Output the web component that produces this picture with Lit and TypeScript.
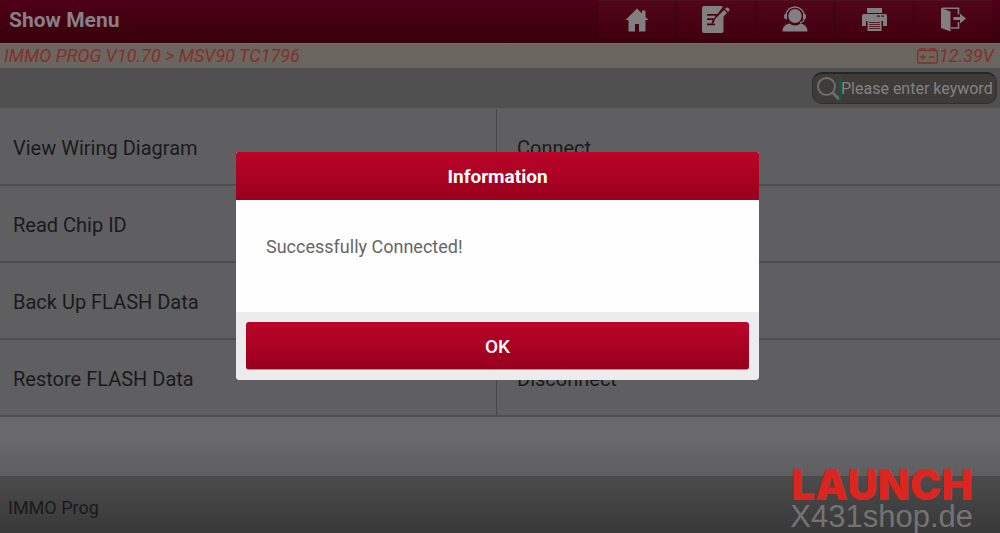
import { LitElement, html, css, svg } from "lit";
import { customElement, state } from "lit/decorators.js";

const home = svg`<path d="M12 1 0.500 12.500H3.500V24h6.500v-7.500h4V24h6.500V12.500h3L20.500 9.500V3H17V6z"/>`;
const edit = svg`<path d="M2 0h17a2 2 0 0 1 1.800 1L15.500 8H5v1.800h9l-2 2.400H5V14h5.500L9.500 17.500l4-1L21.500 8.500V25a2 2 0 0 1-2 2H2a2 2 0 0 1-2-2V2a2 2 0 0 1 2-2zM5 17.500v1.800h8v-1.800z" fill-rule="evenodd"/><path d="M22 4l3 3-9 9-4.500 1.500L13 13zM23 3l1.200-1.200q1-.800 2 0l1 1q.800 1 0 2L26 6z"/>`;
const support = svg`<ellipse cx="13" cy="9" rx="6.700" ry="7"/><path d="M4 8.500a9 8.500 0 0 1 18 0M23 10q-.500 4.500-5 6" fill="none" stroke="currentColor" stroke-width="1.400"/><path d="M2 9q0-2.500 3-2.500v6Q2 12.500 2 9zM24 9q0-2.500-3-2.500v6q3 0 3-3.500zM.500 24.500c0-4.500 2.500-7 7-8 3 2.500 8 2.500 11 0 4.500 1 7 3.500 7 8z"/>`;
const printer = svg`<path d="M5 0h15v5H5zM2 6h21a2 2 0 0 1 2 2V18h-4v-5H4v5H0V8a2 2 0 0 1 2-2zM15 7.500v1.200h3V7.500zM19.500 7.500v1.200H22V7.500z" fill-rule="evenodd"/><path d="M5.500 12h14v11h-14zM7 14v.800h11V14zM7 16v.800h11V16zM7 18v.800h11V18zM7 20v.800h11V20z" fill-rule="evenodd"/>`;
const exit = svg`<path d="M0 .500l9.500 3.500v20L0 20.500z"/><path d="M1 .800h16.500V7M17.500 14.500v6H10" fill="none" stroke="currentColor" stroke-width="1.600"/><path d="M12.500 9.500H19V6l6 5-6 5v-3.500h-6.500z"/>`;

const tools = [
  { name: "Home", icon: home, box: "0 0 24 24", size: "24" },
  { name: "Edit", icon: edit, box: "0 0 28 27", size: "28" },
  { name: "Support", icon: support, box: "0 0 26 25", size: "26" },
  { name: "Print", icon: printer, box: "0 0 25 23", size: "25" },
  { name: "Exit", icon: exit, box: "0 0 25 24", size: "25" },
];

const entries = [
  "View Wiring Diagram", "Connect",
  "Read Chip ID", "",
  "Back Up FLASH Data", "",
  "Restore FLASH Data", "Disconnect",
];

@customElement("app-root")
export class AppRoot extends LitElement {
  @state() private open = true;

  static styles = css`
    * { box-sizing: border-box; }
    :host {
      display: flex;
      flex-direction: column;
      position: relative;
      min-height: 100vh;
      overflow: hidden;
      font-family: Roboto, sans-serif;
      font-size: 18px;
      line-height: 24px;
      color: #1a1a1b;
      background: linear-gradient(#5d5d5f, #69696b 440px, #5e5e60 475px);
    }
    button { font: inherit; border: 0; padding: 0; cursor: pointer; }
    .top {
      display: flex;
      height: 43px;
      padding-right: 8px;
      background: linear-gradient(#4f0017, #38000c);
      color: #858184;
    }
    h1 { flex: 1; margin: 0; padding: 0 9px; font-size: 21px; font-weight: 700; line-height: 40px; }
    .tools { display: flex; border-top: 1px solid #4f1020; }
    .tool {
      display: grid;
      place-items: center;
      width: 79px;
      height: 37px;
      border-left: 1px solid #35000b;
      background: linear-gradient(#500619, #42000f);
      color: #817f80;
    }
    .status {
      display: flex;
      justify-content: space-between;
      height: 25px;
      padding: 0 6px 0 4px;
      border-top: 1px solid #756d68;
      background: #6a655f;
      color: #84302b;
      font-style: italic;
    }
    .power { display: flex; align-items: center; gap: 1px; }
    .find { display: flex; justify-content: flex-end; height: 41px; padding: 4px 3px; background: #505050; border-bottom: 1px solid #5d5d5e; }
    .search {
      display: flex;
      align-items: center;
      width: 185px;
      height: 32px;
      padding-left: 4px;
      border: 1px solid #303030;
      border-top: 2px solid #262626;
      border-radius: 10px;
      background: #3e3b39;
      color: #6d6d6d;
    }
    .search svg { flex: none; }
    .search input {
      flex: 1;
      min-width: 0;
      height: 22px;
      margin-left: -2px;
      padding: 0;
      border: 0;
      border-left: 2px solid #0d5c4a;
      outline: 0;
      background: none;
      color: #848281;
      font: 16px/22px Roboto, sans-serif;
    }
    .search input::placeholder { color: #848281; opacity: 1; }
    .menu { display: grid; grid-template-columns: 1fr 1fr; margin: 0; padding: 0; list-style: none; background: #5f5f61; font-size: 20px; }
    .menu li { display: flex; height: 77px; border-bottom: 2px solid #504d4e; }
    .menu li:nth-child(odd) { border-right: 1px solid #4a4748; margin-right: 3px; }
    .menu li:nth-child(even) { margin-left: -3px; }
    .entry { flex: 1; padding: 3px 20px 0; background: none; color: inherit; text-align: left; }
    .menu li:nth-child(odd) .entry { padding-left: 13px; }
    footer {
      height: 57px;
      margin-top: auto;
      padding: 0 8px;
      background: linear-gradient(#4b4b4b, #383838);
      line-height: 64px;
    }
    .brand { position: absolute; right: 27px; bottom: 0; text-align: right; font-family: "Liberation Sans", sans-serif; }
    .brand strong { display: block; color: #db251e; font: 900 42px/32px Inter, sans-serif; }
    .brand span { display: block; color: #737373; font-size: 31px; line-height: 32px; }
    .layer { position: absolute; inset: 0; display: grid; place-items: center; padding: 0 5px 1px 0; }
    .dialog { width: 523px; max-width: 90%; overflow: hidden; border-radius: 2px 2px 4px 4px; background: #fefefe; }
    .dialog h2 {
      margin: 0;
      padding-top: 2px;
      background: linear-gradient(#bb0429, #9a001d);
      color: #fff;
      font-size: 19px;
      font-weight: 700;
      line-height: 46px;
      text-align: center;
    }
    .dialog p { height: 112px; margin: 0; padding: 35px 30px; color: #666; }
    .actions { padding: 10px; background: #ececec; }
    .ok {
      display: block;
      width: 100%;
      height: 48px;
      padding-top: 2px;
      border-bottom: 1px solid #d08394;
      border-radius: 3px;
      background: linear-gradient(#bb0429, #97001d);
      color: #fff;
      font-size: 19px;
      font-weight: 500;
    }
  `;

  render() {
    return html`
      <header class="top">
        <h1>Show Menu</h1>
        <nav class="tools">
          ${tools.map((t) => html`<button class="tool" aria-label=${t.name}>
            <svg width=${t.size} height="27" viewBox=${t.box} fill="currentColor">${t.icon}</svg>
          </button>`)}
        </nav>
      </header>
      <div class="status">
        <span>IMMO PROG V10.70 &gt; MSV90 TC1796</span>
        <span class="power">
          <svg width="21" height="16" viewBox="0 0 21 16" fill="none" stroke="currentColor" stroke-width="1.300">
            <rect x="0.700" y="2.500" width="19.600" height="12.500" rx="1"/>
            <path d="M3 2.500V1h5v1.500M13 2.500V1h5v1.500M3 9h6M6 6v6M12 9h5.500" />
          </svg>12.39V
        </span>
      </div>
      <div class="find">
        <label class="search">
          <svg width="24" height="24" viewBox="0 0 24 24" fill="none" stroke="currentColor" stroke-width="2">
            <circle cx="9.500" cy="9.500" r="8.500"/><path d="M15.500 15.500l7 7" stroke-width="3"/>
          </svg>
          <input type="text" aria-label="Search" placeholder="Please enter keyword" />
        </label>
      </div>
      <ul class="menu">
        ${entries.map((e) => html`<li>${e ? html`<button class="entry">${e}</button>` : ""}</li>`)}
      </ul>
      <footer>IMMO Prog</footer>
      ${this.open ? html`<div class="layer">
        <section class="dialog" role="dialog" aria-labelledby="title">
          <h2 id="title">Information</h2>
          <p>Successfully Connected!</p>
          <div class="actions"><button class="ok" @click=${() => (this.open = false)}>OK</button></div>
        </section>
      </div>` : ""}
      <div class="brand"><strong>LAUNCH</strong><span>X431shop.de</span></div>
    `;
  }
}
